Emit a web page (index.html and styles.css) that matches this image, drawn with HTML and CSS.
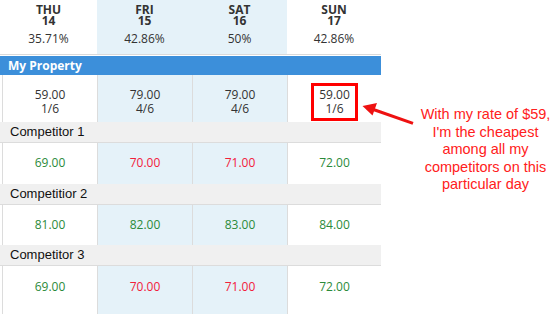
FILE: index.html
```html
<!DOCTYPE html>
<html>
<head>
<meta charset="utf-8">
<link rel="stylesheet" href="styles.css">
</head>
<body>
<div class="page">
  <div class="rates">
    <div class="head">
      <div class="hcell"><div class="day">THU</div><div class="day">14</div><div class="pct">35.71%</div></div>
      <div class="hcell alt"><div class="day">FRI</div><div class="day">15</div><div class="pct">42.86%</div></div>
      <div class="hcell alt"><div class="day">SAT</div><div class="day">16</div><div class="pct">50%</div></div>
      <div class="hcell"><div class="day">SUN</div><div class="day">17</div><div class="pct">42.86%</div></div>
    </div>
    <div class="bar">My Property</div>
    <div class="row own">
      <div class="cell first"><span class="val">59.00<br>1/6</span></div>
      <div class="cell alt"><span class="val">79.00<br>4/6</span></div>
      <div class="cell alt"><span class="val">79.00<br>4/6</span></div>
      <div class="cell"><span class="val mark">59.00<br>1/6</span></div>
    </div>
    <div class="band">Competitor 1</div>
    <div class="row comp">
      <div class="cell first green">69.00</div>
      <div class="cell alt red">70.00</div>
      <div class="cell alt red">71.00</div>
      <div class="cell green">72.00</div>
    </div>
    <div class="band">Competitior 2</div>
    <div class="row comp">
      <div class="cell first green">81.00</div>
      <div class="cell alt green">82.00</div>
      <div class="cell alt green">83.00</div>
      <div class="cell green">84.00</div>
    </div>
    <div class="band">Competitor 3</div>
    <div class="row comp last">
      <div class="cell first green">69.00</div>
      <div class="cell alt red">70.00</div>
      <div class="cell alt red">71.00</div>
      <div class="cell green">72.00</div>
    </div>
  </div>
  <div class="note">With my rate of $59,<br>I'm the cheapest<br>among all my<br>competitors on this<br>particular day</div>
</div>
<svg class="arrow" width="556" height="314" viewBox="0 0 556 314">
  <line x1="413" y1="123.3" x2="372" y2="109" stroke="#ee1111" stroke-width="3"/>
  <polygon points="362.5,106 377,103 372.5,115.5" fill="#ee1111"/>
</svg>
</body>
</html>
```
FILE: styles.css
```css
html, body {
  margin: 0;
  padding: 0;
  background: #fff;
}
.page {
  display: flex;
  align-items: flex-start;
}
.rates {
  width: 381px;
  font-family: "Open Sans", sans-serif;
  font-size: 12px;
  color: #333;
}
.head {
  display: grid;
  grid-template-columns: 97px 95px 95px 94px;
  height: 54px;
  border-bottom: 1px solid #dadada;
  margin-bottom: 1px;
}
.hcell {
  text-align: center;
  padding-top: 4.4px;
}
.alt {
  background: #e5f2f9;
}
.day {
  font-weight: bold;
  line-height: 11px;
}
.pct {
  line-height: 14px;
  margin-top: 5.6px;
}
.bar {
  height: 19px;
  line-height: 19px;
  background: #3c8fda;
  color: #fff;
  font-weight: bold;
  padding-left: 8px;
}
.row {
  display: grid;
  grid-template-columns: 97px 95px 95px 94px;
}
.cell {
  border-left: 1px solid #dcdcdc;
  text-align: center;
}
.cell.first {
  margin-left: 2px;
}
.own {
  height: 47px;
}
.own .cell {
  padding-top: 8px;
}
.val {
  display: inline-block;
  line-height: 14px;
  padding: 2px 5px;
  border: 3px solid transparent;
}
.val.mark {
  border-color: #ff0000;
}
.comp {
  height: 40.5px;
}
.comp .cell {
  line-height: 40.5px;
}
.comp.last {
  height: 60px;
}
.comp.last .cell {
  line-height: 42px;
}
.band {
  height: 20px;
  line-height: 20px;
  background: #f0f0f0;
  border-bottom: 1px solid #dcdcdc;
  font-family: "Liberation Sans", Arial, sans-serif;
  font-size: 13px;
  color: #111;
  padding-left: 10px;
}
.green {
  color: #2b8a3a;
}
.red {
  color: #f2203a;
}
.note {
  flex: 1;
  margin-left: 34px;
  padding-top: 106px;
  text-align: center;
  font-family: "Liberation Sans", Arial, sans-serif;
  font-size: 14.5px;
  line-height: 17.5px;
  color: #ff2020;
}
.arrow {
  position: absolute;
  left: 0;
  top: 0;
  pointer-events: none;
}
```
